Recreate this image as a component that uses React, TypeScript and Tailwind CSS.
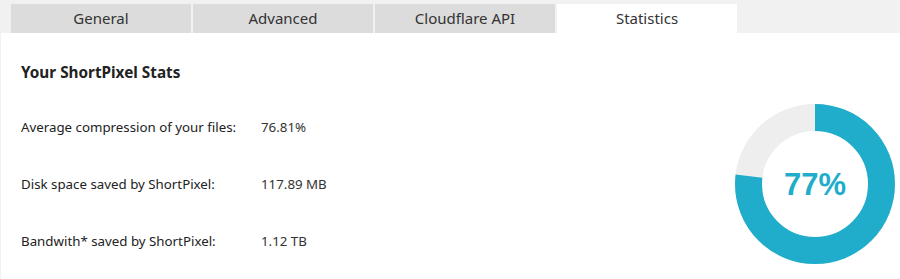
import React from 'react';

const tabs = ['General', 'Advanced', 'Cloudflare API', 'Statistics'];

const stats = [
  { label: 'Average compression of your files:', value: '76.81%' },
  { label: 'Disk space saved by ShortPixel:', value: '117.89 MB' },
  { label: 'Bandwith* saved by ShortPixel:', value: '1.12 TB' },
];

function Donut({ percent }: { percent: number }) {
  const r = 66.5;
  const c = 2 * Math.PI * r;
  return (
    <div className="relative w-[160px] h-[160px]">
      <svg width="160" height="160" viewBox="0 0 160 160" className="-rotate-90">
        <circle cx="80" cy="80" r={r} fill="none" stroke="#eeeeee" strokeWidth="27" />
        <circle
          cx="80"
          cy="80"
          r={r}
          fill="none"
          stroke="#1fadcb"
          strokeWidth="27"
          strokeDasharray={`${(c * percent) / 100} ${c}`}
        />
      </svg>
      <div className="absolute inset-0 flex items-center justify-center pt-[3px] font-['Liberation_Sans',Arial,sans-serif] font-bold text-[31px] text-[#1fadcb]">
        {Math.round(percent)}%
      </div>
    </div>
  );
}

export default function App() {
  return (
    <div className="w-[900px] h-[279px] bg-white font-['Noto_Sans','Open_Sans',sans-serif] text-[#222]">
      <div className="h-[33px] bg-[#f1f1f1] pt-[4px] pl-[11px] flex gap-[2px]">
        {tabs.map((t, i) => (
          <div
            key={t}
            className={
              'w-[180px] h-[29px] flex items-center justify-center text-[15px] ' +
              (i === 3 ? 'bg-white text-[#333]' : 'bg-[#dcdcdc] text-[#333]')
            }
          >
            {t}
          </div>
        ))}
      </div>
      <div className="h-[246px] border-l border-[#f1f1f1] flex justify-between">
        <div className="pl-[20px] pt-[29px]">
          <h2 className="h-[20px] leading-[20px] text-[15.3px] font-bold text-[#222]">Your ShortPixel Stats</h2>
          <div className="mt-[17px]">
            {stats.map((s) => (
              <div key={s.label} className="h-[57px] flex items-center text-[13.3px]">
                <span className="w-[240px] text-[#222]">{s.label}</span>
                <span className="text-[#333]">{s.value}</span>
              </div>
            ))}
          </div>
        </div>
        <div className="pt-[71px] pr-[5px]">
          <Donut percent={76.81} />
        </div>
      </div>
    </div>
  );
}
